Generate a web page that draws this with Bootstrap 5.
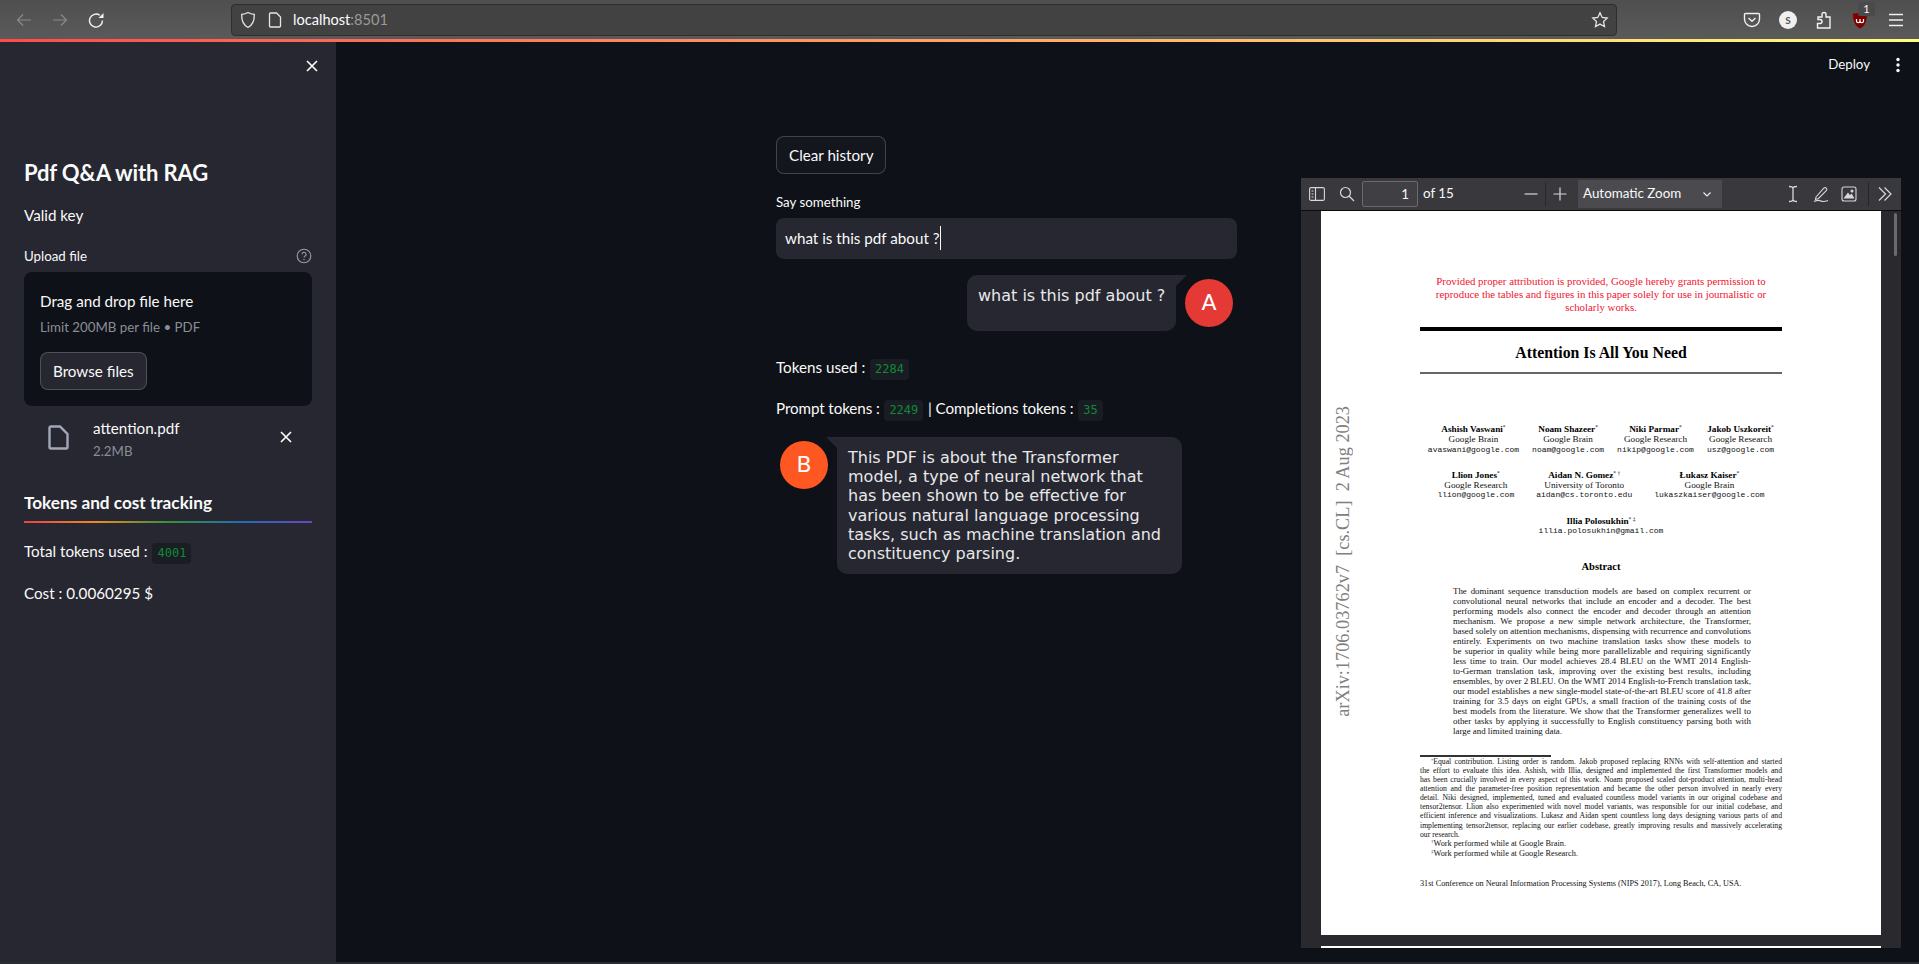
<!DOCTYPE html>
<html lang="en">
<head>
    <meta charset="UTF-8">
    <meta name="viewport" content="width=device-width, initial-scale=1.0">
    <title>Pdf Q&amp;A with RAG</title>
    <link href="https://cdn.jsdelivr.net/npm/bootstrap@5.3.3/dist/css/bootstrap.min.css" rel="stylesheet">
    <style>
        html, body { height: 100%; }
        body {
            background: #0e1117;
            color: #fafafa;
            font-family: "Lato", "Liberation Sans", sans-serif;
            overflow: hidden;
        }
        svg { display: block; flex: none; }

        /* browser chrome */
        .browser-bar {
            height: 39px;
            flex: none;
            background: linear-gradient(180deg, #4f4f4f, #5a5a5a);
            color: #fbfbfe;
        }
        .nav-icon { width: 16px; height: 16px; margin-left: 20px; }
        .nav-icon:first-child { margin-left: 16px; }
        .url-box {
            margin-left: 127px;
            width: 1386px;
            height: 32px;
            background: #424242;
            border: 1px solid #2e2e2e;
            border-radius: 4px;
            padding: 0 7px 0 8px;
        }
        .url-page { margin-left: 12px; }
        .url-text { font-size: 14.6px; margin-left: 11px; }
        .url-port { color: #9a9a9a; }
        .ext-group { margin-left: 126px; gap: 18px; }
        .ext-icon { width: 18px; height: 18px; position: relative; }
        .ext-badge {
            position: absolute;
            top: -9px;
            left: 7px;
            width: 17px;
            height: 14px;
            background: #4a4a4a;
            border-radius: 2px;
            font-size: 11px;
            line-height: 14px;
            text-align: center;
        }
        .s-ext {
            width: 18px;
            height: 18px;
            border-radius: 50%;
            background: #f0f0f0;
            color: #555;
            font-size: 10px;
            font-weight: 700;
            line-height: 18px;
            text-align: center;
        }
        .rainbow-line {
            height: 3px;
            flex: none;
            background: linear-gradient(90deg, #ff4b4b, #fffd80);
        }
        .app-body { min-height: 0; }
        .bottom-strip { height: 2px; flex: none; background: #2a2c33; }

        /* sidebar */
        .side-panel {
            width: 336px;
            flex: none;
            background: #262730;
            padding: 14px 24px 0;
        }
        .side-close { margin: 0 -10px 0 10px; }
        .app-title { font-size: 22px; font-weight: 700; line-height: 36px; margin: 79px 0 0; letter-spacing: -.15px; }
        .text-line { font-size: 15.2px; line-height: 24px; height: 24px; }
        .key-line { margin-top: 12px; }
        .field-label { font-size: 13.3px; line-height: 20px; }
        .upload-row { margin-top: 19px; }
        .drop-zone {
            height: 134px;
            margin-top: 6px;
            padding: 17px 16px 0;
            background: #0e1117;
            border-radius: 8px;
        }
        .limit-text { color: #8b8e97; font-size: 13.3px; line-height: 20px; margin-top: 4px; }
        .st-btn {
            height: 38px;
            padding: 0 12px;
            font-size: 15.2px;
            line-height: 35px;
            color: #fafafa;
            border: 1px solid rgba(250, 250, 250, .2);
            border-radius: 8px;
            background: #262730;
            font-family: inherit;
        }
        .st-btn:hover { color: #fafafa; background: #262730; border-color: rgba(250, 250, 250, .2); }
        .browse-btn { margin-top: 15px; }
        .clear-btn { background: #13161d; }
        .clear-btn:hover { background: #13161d; }
        .file-row { margin-top: 10px; }
        .file-size { color: #8b8e97; font-size: 13.3px; line-height: 20px; margin-top: 1px; }
        .file-icon { margin: 9px 24px 0 24px; }
        .file-close { margin: 11px 16px 0 auto; }
        .track-title { font-size: 17.2px; font-weight: 700; line-height: 28px; margin: 28px 0 0; }
        .rainbow-rule {
            height: 2px;
            margin-top: 4px;
            background: linear-gradient(90deg, #e64545, #f08a24, #3a8f3a, #1f6fb5, #6f42c1);
        }
        .total-line { margin-top: 16px; }
        .cost-line { margin-top: 18px; }
        .token-chip {
            display: inline-block;
            height: 21px;
            padding: 0 5px;
            margin: 0 1px;
            background: #1a1c24;
            border-radius: 4px;
            color: #0f8a37;
            font-family: "DejaVu Sans Mono", "Liberation Mono", monospace;
            font-size: 12px;
            line-height: 21px;
            letter-spacing: 0;
        }
        .side-panel .token-chip { background: #1b1d25; }

        /* main area */
        .main-area { min-width: 0; }
        .top-actions { height: 46px; padding-right: 19px; gap: 26px; font-size: 13.3px; }
        .chat-col {
            width: 461px;
            flex: none;
            margin-left: 440px;
            padding-top: 48px;
        }
        .say-label { margin-top: 18px; }
        .chat-input {
            height: 41px;
            margin-top: 6px;
            padding: 0 9px;
            background: #262730;
            border-radius: 8px;
            font-size: 15.2px;
            line-height: 41px;
            color: #fafafa;
        }
        .caret-bar { border-right: 1px solid #fafafa; padding: 3px 0; }
        .msg-row { margin-top: 16px; }
        .bot-row { margin-top: 17px; }
        .chat-bubble {
            position: relative;
            background: #262730;
            border-radius: 10px;
            padding: 11px 11px;
            color: #e8e8ea;
            font-family: "DejaVu Sans", "Liberation Sans", sans-serif;
            font-size: 16px;
            line-height: 19.2px;
        }
        .bubble-user { width: 209px; height: 56px; margin-right: 9px; border-top-right-radius: 0; }
        .bubble-user::after {
            content: "";
            position: absolute;
            top: 0;
            right: -11px;
            border-top: 11px solid #262730;
            border-right: 11px solid transparent;
        }
        .bubble-bot { width: 345px; height: 137px; margin-left: 9px; border-top-left-radius: 0; }
        .bubble-bot::before {
            content: "";
            position: absolute;
            top: 0;
            left: -11px;
            border-top: 11px solid #262730;
            border-left: 11px solid transparent;
        }
        .avatar-dot {
            width: 48px;
            height: 48px;
            flex: none;
            margin-top: 4px;
            border-radius: 50%;
            color: #fff;
            font-family: "DejaVu Sans", sans-serif;
            font-size: 22px;
            line-height: 48px;
            text-align: center;
        }
        .avatar-a { background: #e53935; }
        .avatar-b { background: #ff5722; }
        .used-line { margin-top: 24px; }
        .prompt-line { margin-top: 17px; letter-spacing: -.1px; }

        /* pdf viewer */
        .pdf-frame {
            width: 600px;
            height: 770px;
            flex: none;
            margin: 90px 0 0 64px;
            background: #2a2a2e;
            overflow: hidden;
            position: relative;
        }
        .pdf-bar {
            height: 33px;
            background: #38383d;
            border-bottom: 1px solid #0c0c0d;
            color: #f9f9fa;
            font-size: 13.4px;
            padding: 0 0 1px 8px;
        }
        .bar-sep { width: 1px; height: 24px; background: #27272b; flex: none; margin-left: 6px; }
        .bar-search { margin-left: 14px; }
        .page-box {
            width: 56px;
            height: 26px;
            margin-left: 7px;
            border: 1px solid #6a6a6e;
            border-radius: 2px;
            background: #3f3f44;
            padding-right: 8px;
            line-height: 25px;
            text-align: right;
        }
        .page-of { margin-left: 5px; width: 100px; }
        .bar-plus { margin-left: 6px; }
        .zoom-box {
            width: 144px;
            height: 28px;
            margin-left: 10px;
            padding: 0 10px 0 5px;
            background: #4a4a4f;
        }
        .bar-cursor { margin-left: 63px; }
        .bar-tool { margin-left: 12px; }
        .bar-sep-end { margin-left: 11px; }
        .bar-more { margin-left: 8px; }
        .pdf-page {
            position: relative;
            width: 560px;
            height: 724px;
            margin-left: 20px;
            background: #fff;
            padding-top: 64px;
            color: #111;
            font-family: "Liberation Serif", serif;
            text-align: center;
        }
        .pdf-next { width: 560px; height: 2px; margin: 11px 0 0 20px; background: #fff; }
        .pdf-thumb {
            position: absolute;
            top: 35px;
            right: 4px;
            width: 3px;
            height: 43px;
            background: #6b6b6f;
            border-radius: 2px;
        }
        .arxiv-tag {
            position: absolute;
            left: 9px;
            top: 195px;
            writing-mode: vertical-rl;
            transform: rotate(180deg);
            color: #808080;
            font-size: 18.3px;
            line-height: 26px;
            white-space: pre;
        }
        .red-note { color: #f0142f; font-size: 10.85px; line-height: 13px; }
        .paper-block { width: 362px; margin-left: auto; margin-right: auto; }
        .rule-thick { height: 4px; margin-top: 13px; background: #000; }
        .paper-title { font-size: 15.8px; font-weight: 700; line-height: 24px; margin: 10px 0 0; color: #000; }
        .rule-thin { height: 2px; margin-top: 7px; background: #666; }
        .author-row { font-size: 9.2px; line-height: 10.3px; margin-top: 15px; }
        .authors-a { margin-top: 50px; gap: 13px; }
        .authors-b { gap: 22px; }
        .author-name { font-weight: 700; color: #000; }
        .author-mail { font-family: "Liberation Mono", monospace; font-size: 8px; }
        .abstract-title { font-size: 10.5px; font-weight: 700; line-height: 12px; margin: 25px 0 0; color: #000; }
        .abstract-text { width: 298px; margin: 13px 0 0 132px; font-size: 8.9px; line-height: 10px; text-align: left; }
        .just-line { text-align-last: justify; }
        .foot-rule { width: 131px; height: 1.5px; margin: 19px 0 0 99px; background: #333; }
        .foot-text { width: 362px; margin-left: 99px; font-size: 7.7px; line-height: 9.1px; text-align: left; }
        .foot-indent { text-indent: 11px; }
        .foot-extra { font-size: 8.3px; line-height: 10px; }
        .conf-line { margin: 20px 0 0 99px; font-size: 8.2px; line-height: 10px; text-align: left; }
        .foot-text sup, .author-name sup { font-size: 60%; line-height: 0; font-weight: 400; }
    </style>
</head>
<body class="d-flex flex-column">
    <!-- Browser toolbar -->
    <div class="browser-bar d-flex align-items-center">
        <svg class="nav-icon" viewBox="0 0 16 16" fill="none" stroke="#8a8a8a" stroke-width="1.2"><path d="M15 8H1.500M7 2.500 1.500 8 7 13.500"/></svg>
        <svg class="nav-icon" viewBox="0 0 16 16" fill="none" stroke="#8a8a8a" stroke-width="1.2"><path d="M1 8h13.500M9 2.500 14.500 8 9 13.500"/></svg>
        <svg class="nav-icon" viewBox="0 0 16 16" fill="none" stroke="#f4f4f4" stroke-width="1.4"><path d="M14.500 8.500A6.500 6.500 0 1 1 11.800 3.300"/><path d="M10.500 6h5V1z" fill="#f4f4f4" stroke="none"/></svg>
        <div class="url-box d-flex align-items-center">
            <svg width="16" height="18" viewBox="0 0 16 18" fill="none" stroke="#e6e6e6" stroke-width="1.3"><path d="M8 1.500c2 1.200 4 1.700 6.300 1.800C14.500 9.500 12.800 14 8 16.500 3.200 14 1.500 9.500 1.700 3.300 4 3.200 6 2.700 8 1.500z"/></svg>
            <svg class="url-page" width="14" height="16" viewBox="0 0 14 16" fill="none" stroke="#e6e6e6" stroke-width="1.3"><path d="M2.500 1h6L12.500 5v9a1 1 0 0 1-1 1h-9a1 1 0 0 1-1-1V2a1 1 0 0 1 1-1z"/></svg>
            <span class="url-text">localhost<span class="url-port">:8501</span></span>
            <svg class="ms-auto" width="18" height="18" viewBox="0 0 18 18" fill="none" stroke="#e6e6e6" stroke-width="1.3"><path d="M9 1.800 11.200 6.500l5 .6-3.700 3.500 1 5L9 13.100l-4.500 2.500 1-5L1.800 7.100l5-.6z"/></svg>
        </div>
        <div class="ext-group d-flex align-items-center">
            <svg class="ext-icon" viewBox="0 0 18 18" fill="none" stroke="#f0f0f0" stroke-width="1.4"><path d="M2.500 2.500h13a1 1 0 0 1 1 1V8a7.500 7.500 0 0 1-15 0V3.500a1 1 0 0 1 1-1z"/><path d="M5.500 7 9 10.300 12.500 7"/></svg>
            <div class="s-ext">S</div>
            <svg class="ext-icon" viewBox="0 0 18 18" fill="none" stroke="#f4f4f4" stroke-width="1.4"><path d="M3 6h4V3.500a2 2 0 0 1 4 0V6h4v11H2.500v-4.500H5a2 2 0 0 0 0-4H3z"/></svg>
            <div class="ext-icon">
                <svg width="18" height="18" viewBox="0 0 18 18"><path d="M9 1c2 1 4 1.500 7 1.500C16 10 14 15 9 17.500 4 15 2 10 2 2.500 5 2.500 7 2 9 1z" fill="#800000"/><path d="M5.500 8v2a1.700 1.700 0 0 0 3.500 0V8v2a1.700 1.700 0 0 0 3.500 0V8" fill="none" stroke="#fff" stroke-width="1.200"/></svg>
                <span class="ext-badge">1</span>
            </div>
            <svg class="ext-icon" viewBox="0 0 18 18" stroke="#f0f0f0" stroke-width="1.4"><path d="M2 3.500h14M2 9h14M2 14.500h14"/></svg>
        </div>
    </div>
    <div class="rainbow-line"></div>

    <div class="app-body d-flex flex-grow-1">
        <!-- Sidebar -->
        <aside class="side-panel">
            <div class="side-close d-flex justify-content-end">
                <svg width="20" height="20" viewBox="0 0 20 20" stroke="#fafafa" stroke-width="1.700"><path d="M5 5l10 10M15 5 5 15"/></svg>
            </div>
            <h1 class="app-title">Pdf Q&amp;A with RAG</h1>
            <div class="text-line key-line">Valid key</div>
            <div class="upload-row d-flex justify-content-between align-items-center field-label">
                <span>Upload file</span>
                <svg width="16" height="16" viewBox="0 0 16 16" fill="none" stroke="#9a9ca6" stroke-width="1.100"><circle cx="8" cy="8" r="6.800"/><path d="M6 6.300a2 2 0 1 1 3 1.700c-.7.400-1 .8-1 1.600"/><path d="M8 11v1.200"/></svg>
            </div>
            <div class="drop-zone">
                <div class="text-line">Drag and drop file here</div>
                <div class="limit-text">Limit 200MB per file &bull; PDF</div>
                <button type="button" class="btn st-btn browse-btn">Browse files</button>
            </div>
            <div class="file-row d-flex">
                <svg class="file-icon" width="21" height="25" viewBox="0 0 21 25" fill="none" stroke="#a3a8b8" stroke-width="2.400"><path d="M3 1.500h9L19.500 9v13a1.500 1.500 0 0 1-1.500 1.500H3A1.500 1.500 0 0 1 1.500 22V3A1.500 1.500 0 0 1 3 1.500z"/></svg>
                <div>
                    <div class="text-line">attention.pdf</div>
                    <div class="file-size">2.2MB</div>
                </div>
                <svg class="file-close" width="20" height="20" viewBox="0 0 20 20" stroke="#fafafa" stroke-width="1.700"><path d="M5 5l10 10M15 5 5 15"/></svg>
            </div>
            <h2 class="track-title">Tokens and cost tracking</h2>
            <div class="rainbow-rule"></div>
            <div class="text-line total-line">Total tokens used : <span class="token-chip">4001</span></div>
            <div class="text-line cost-line">Cost : 0.0060295 $</div>
        </aside>

        <div class="main-area flex-grow-1">
            <div class="top-actions d-flex justify-content-end align-items-center">
                <span>Deploy</span>
                <svg width="4" height="16" viewBox="0 0 4 16" fill="#fafafa"><circle cx="2" cy="2.500" r="1.700"/><circle cx="2" cy="8" r="1.700"/><circle cx="2" cy="13.500" r="1.700"/></svg>
            </div>
            <div class="d-flex">
                <!-- Chat -->
                <main class="chat-col">
                    <button type="button" class="btn st-btn clear-btn">Clear history</button>
                    <div class="field-label say-label">Say something</div>
                    <div class="chat-input"><span class="caret-bar">what is this pdf about ?</span></div>
                    <div class="msg-row d-flex justify-content-end pe-1">
                        <div class="chat-bubble bubble-user text-nowrap">what is this pdf about ?</div>
                        <div class="avatar-dot avatar-a">A</div>
                    </div>
                    <div class="text-line used-line">Tokens used : <span class="token-chip">2284</span></div>
                    <div class="text-line prompt-line">Prompt tokens : <span class="token-chip">2249</span> | Completions tokens : <span class="token-chip">35</span></div>
                    <div class="bot-row d-flex ps-1">
                        <div class="avatar-dot avatar-b">B</div>
                        <div class="chat-bubble bubble-bot">This PDF is about the Transformer model, a type of neural network that has been shown to be effective for various natural language processing tasks, such as machine translation and constituency parsing.</div>
                    </div>
                </main>

                <!-- PDF viewer -->
                <section class="pdf-frame">
                    <div class="pdf-bar d-flex align-items-center">
                        <svg width="16" height="16" viewBox="0 0 16 16" fill="none" stroke="#d8d8da" stroke-width="1.100"><rect x=".6" y="1.600" width="14.800" height="12.800" rx="1.500"/><path d="M6.500 1.600v12.800M2.500 5h2M2.500 8h2M2.500 11h2"/></svg>
                        <svg class="bar-search" width="16" height="16" viewBox="0 0 16 16" fill="none" stroke="#d8d8da" stroke-width="1.200"><circle cx="6.500" cy="6.500" r="5"/><path d="M10 10l5 5"/></svg>
                        <div class="page-box">1</div>
                        <span class="page-of">of 15</span>
                        <svg width="16" height="16" viewBox="0 0 16 16" stroke="#d8d8da" stroke-width="1.200"><path d="M1.500 8h13"/></svg>
                        <div class="bar-sep"></div>
                        <svg class="bar-plus" width="16" height="16" viewBox="0 0 16 16" stroke="#d8d8da" stroke-width="1.200"><path d="M1.500 8h13M8 1.500v13"/></svg>
                        <div class="zoom-box d-flex align-items-center justify-content-between">
                            <span>Automatic Zoom</span>
                            <svg width="10" height="10" viewBox="0 0 10 10" fill="none" stroke="#f0f0f0" stroke-width="1.100"><path d="M1.500 3.500 5 7l3.500-3.500"/></svg>
                        </div>
                        <svg class="bar-cursor" width="16" height="18" viewBox="0 0 16 18" fill="none" stroke="#d8d8da" stroke-width="1.300"><path d="M4 1.500c2.500 0 4 .5 4 2v11c0 1.500-1.500 2-4 2M12 1.500c-2.500 0-4 .5-4 2v11c0 1.500 1.500 2 4 2"/></svg>
                        <svg class="bar-tool" width="16" height="18" viewBox="0 0 16 18" fill="none" stroke="#d8d8da" stroke-width="1.100"><path d="M3 12 11 3a1.800 1.800 0 0 1 2.500 2.500L5.500 13.500 2.500 14.500z"/><path d="M1 16.500c3-1.500 5-1.500 7-.5s4 .5 7-.5"/></svg>
                        <svg class="bar-tool" width="16" height="16" viewBox="0 0 16 16" fill="none" stroke="#d8d8da" stroke-width="1.100"><rect x="1" y="1" width="14" height="14" rx="2"/><path d="M3.500 12 7 7.500l2 2.500 1.500-1.500 2 3.500z" fill="#d8d8da"/><circle cx="11" cy="5" r="1" fill="#d8d8da"/></svg>
                        <div class="bar-sep bar-sep-end"></div>
                        <svg class="bar-more" width="16" height="16" viewBox="0 0 16 16" fill="none" stroke="#d8d8da" stroke-width="1.200"><path d="M2 1.500 8.500 8 2 14.500M7.500 1.500 14 8l-6.500 6.500"/></svg>
                    </div>

                    <article class="pdf-page">
                        <div class="arxiv-tag">arXiv:1706.03762v7  [cs.CL]  2 Aug 2023</div>
                        <div class="red-note">Provided proper attribution is provided, Google hereby grants permission to<br>reproduce the tables and figures in this paper solely for use in journalistic or<br>scholarly works.</div>
                        <div class="paper-block rule-thick"></div>
                        <h3 class="paper-title">Attention Is All You Need</h3>
                        <div class="paper-block rule-thin"></div>

                        <div class="author-row authors-a d-flex justify-content-center">
                            <div><div class="author-name">Ashish Vaswani<sup>*</sup></div>Google Brain<div class="author-mail">avaswani@google.com</div></div>
                            <div><div class="author-name">Noam Shazeer<sup>*</sup></div>Google Brain<div class="author-mail">noam@google.com</div></div>
                            <div><div class="author-name">Niki Parmar<sup>*</sup></div>Google Research<div class="author-mail">nikip@google.com</div></div>
                            <div><div class="author-name">Jakob Uszkoreit<sup>*</sup></div>Google Research<div class="author-mail">usz@google.com</div></div>
                        </div>
                        <div class="author-row authors-b d-flex justify-content-center">
                            <div><div class="author-name">Llion Jones<sup>*</sup></div>Google Research<div class="author-mail">llion@google.com</div></div>
                            <div><div class="author-name">Aidan N. Gomez<sup>* †</sup></div>University of Toronto<div class="author-mail">aidan@cs.toronto.edu</div></div>
                            <div><div class="author-name">Łukasz Kaiser<sup>*</sup></div>Google Brain<div class="author-mail">lukaszkaiser@google.com</div></div>
                        </div>
                        <div class="author-row">
                            <div class="author-name">Illia Polosukhin<sup>* ‡</sup></div>
                            <div class="author-mail">illia.polosukhin@gmail.com</div>
                        </div>

                        <h4 class="abstract-title">Abstract</h4>
                        <div class="abstract-text">
                            <div class="just-line">The dominant sequence transduction models are based on complex recurrent or</div>
                            <div class="just-line">convolutional neural networks that include an encoder and a decoder. The best</div>
                            <div class="just-line">performing models also connect the encoder and decoder through an attention</div>
                            <div class="just-line">mechanism. We propose a new simple network architecture, the Transformer,</div>
                            <div class="just-line">based solely on attention mechanisms, dispensing with recurrence and convolutions</div>
                            <div class="just-line">entirely. Experiments on two machine translation tasks show these models to</div>
                            <div class="just-line">be superior in quality while being more parallelizable and requiring significantly</div>
                            <div class="just-line">less time to train. Our model achieves 28.4 BLEU on the WMT 2014 English-</div>
                            <div class="just-line">to-German translation task, improving over the existing best results, including</div>
                            <div class="just-line">ensembles, by over 2 BLEU. On the WMT 2014 English-to-French translation task,</div>
                            <div class="just-line">our model establishes a new single-model state-of-the-art BLEU score of 41.8 after</div>
                            <div class="just-line">training for 3.5 days on eight GPUs, a small fraction of the training costs of the</div>
                            <div class="just-line">best models from the literature. We show that the Transformer generalizes well to</div>
                            <div class="just-line">other tasks by applying it successfully to English constituency parsing both with</div>
                            <div>large and limited training data.</div>
                        </div>

                        <div class="foot-rule"></div>
                        <div class="foot-text">
                            <div class="just-line foot-indent"><sup>*</sup>Equal contribution. Listing order is random. Jakob proposed replacing RNNs with self-attention and started</div>
                            <div class="just-line">the effort to evaluate this idea. Ashish, with Illia, designed and implemented the first Transformer models and</div>
                            <div class="just-line">has been crucially involved in every aspect of this work. Noam proposed scaled dot-product attention, multi-head</div>
                            <div class="just-line">attention and the parameter-free position representation and became the other person involved in nearly every</div>
                            <div class="just-line">detail. Niki designed, implemented, tuned and evaluated countless model variants in our original codebase and</div>
                            <div class="just-line">tensor2tensor. Llion also experimented with novel model variants, was responsible for our initial codebase, and</div>
                            <div class="just-line">efficient inference and visualizations. Lukasz and Aidan spent countless long days designing various parts of and</div>
                            <div class="just-line">implementing tensor2tensor, replacing our earlier codebase, greatly improving results and massively accelerating</div>
                            <div>our research.</div>
                            <div class="foot-indent foot-extra"><sup>†</sup>Work performed while at Google Brain.</div>
                            <div class="foot-indent foot-extra"><sup>‡</sup>Work performed while at Google Research.</div>
                        </div>
                        <div class="conf-line">31st Conference on Neural Information Processing Systems (NIPS 2017), Long Beach, CA, USA.</div>
                    </article>
                    <div class="pdf-next"></div>
                    <div class="pdf-thumb"></div>
                </section>
            </div>
        </div>
    </div>
    <div class="bottom-strip"></div>

    <script src="https://cdn.jsdelivr.net/npm/bootstrap@5.3.3/dist/js/bootstrap.bundle.min.js"></script>
</body>
</html>
